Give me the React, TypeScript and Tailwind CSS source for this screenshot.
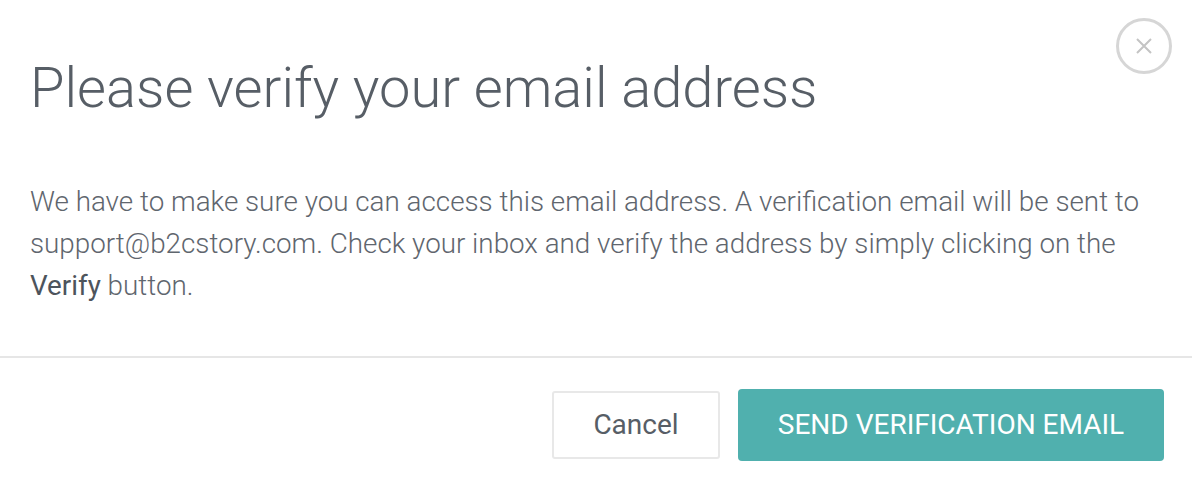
export default function App() {
  return (
    <div className="w-[1192px] h-[488px] bg-white font-['Roboto',sans-serif] text-[#575e66] relative">
      <button className="absolute right-[20px] top-[18px] w-[56px] h-[56px] rounded-full border-[3px] border-[#d6d6d6] flex items-center justify-center">
        <svg width="18" height="18" viewBox="0 0 18 18" stroke="#c4c4c4" strokeWidth="2">
          <path d="M2 2L16 16M16 2L2 16" />
        </svg>
      </button>
      <div className="px-[30px] pt-[52px] h-[356px]">
        <h1 className="text-[56px] font-light leading-[72px] text-[#575e66]">Please verify your email address</h1>
        <p className="mt-[57px] text-[27.8px] leading-[42px] font-light text-[#5f666e] whitespace-nowrap">
          We have to make sure you can access this email address. A verification email will be sent to
          <br />
          support@b2cstory.com. Check your inbox and verify the address by simply clicking on the
          <br />
          <span className="font-normal text-[#4d545c]">Verify</span> button.
        </p>
      </div>
      <div className="border-t-2 border-[#e6e6e6] flex justify-end gap-[18px] pt-[33px] pr-[28px]">
        <button className="w-[168px] h-[68px] border-2 border-[#e8e8e8] rounded-[3px] text-[28px] text-[#575e66]">Cancel</button>
        <button className="w-[426px] h-[72px] -mt-[2px] bg-[#50b0ae] rounded-[4px] text-[28px] text-white">SEND VERIFICATION EMAIL</button>
      </div>
    </div>
  );
}
